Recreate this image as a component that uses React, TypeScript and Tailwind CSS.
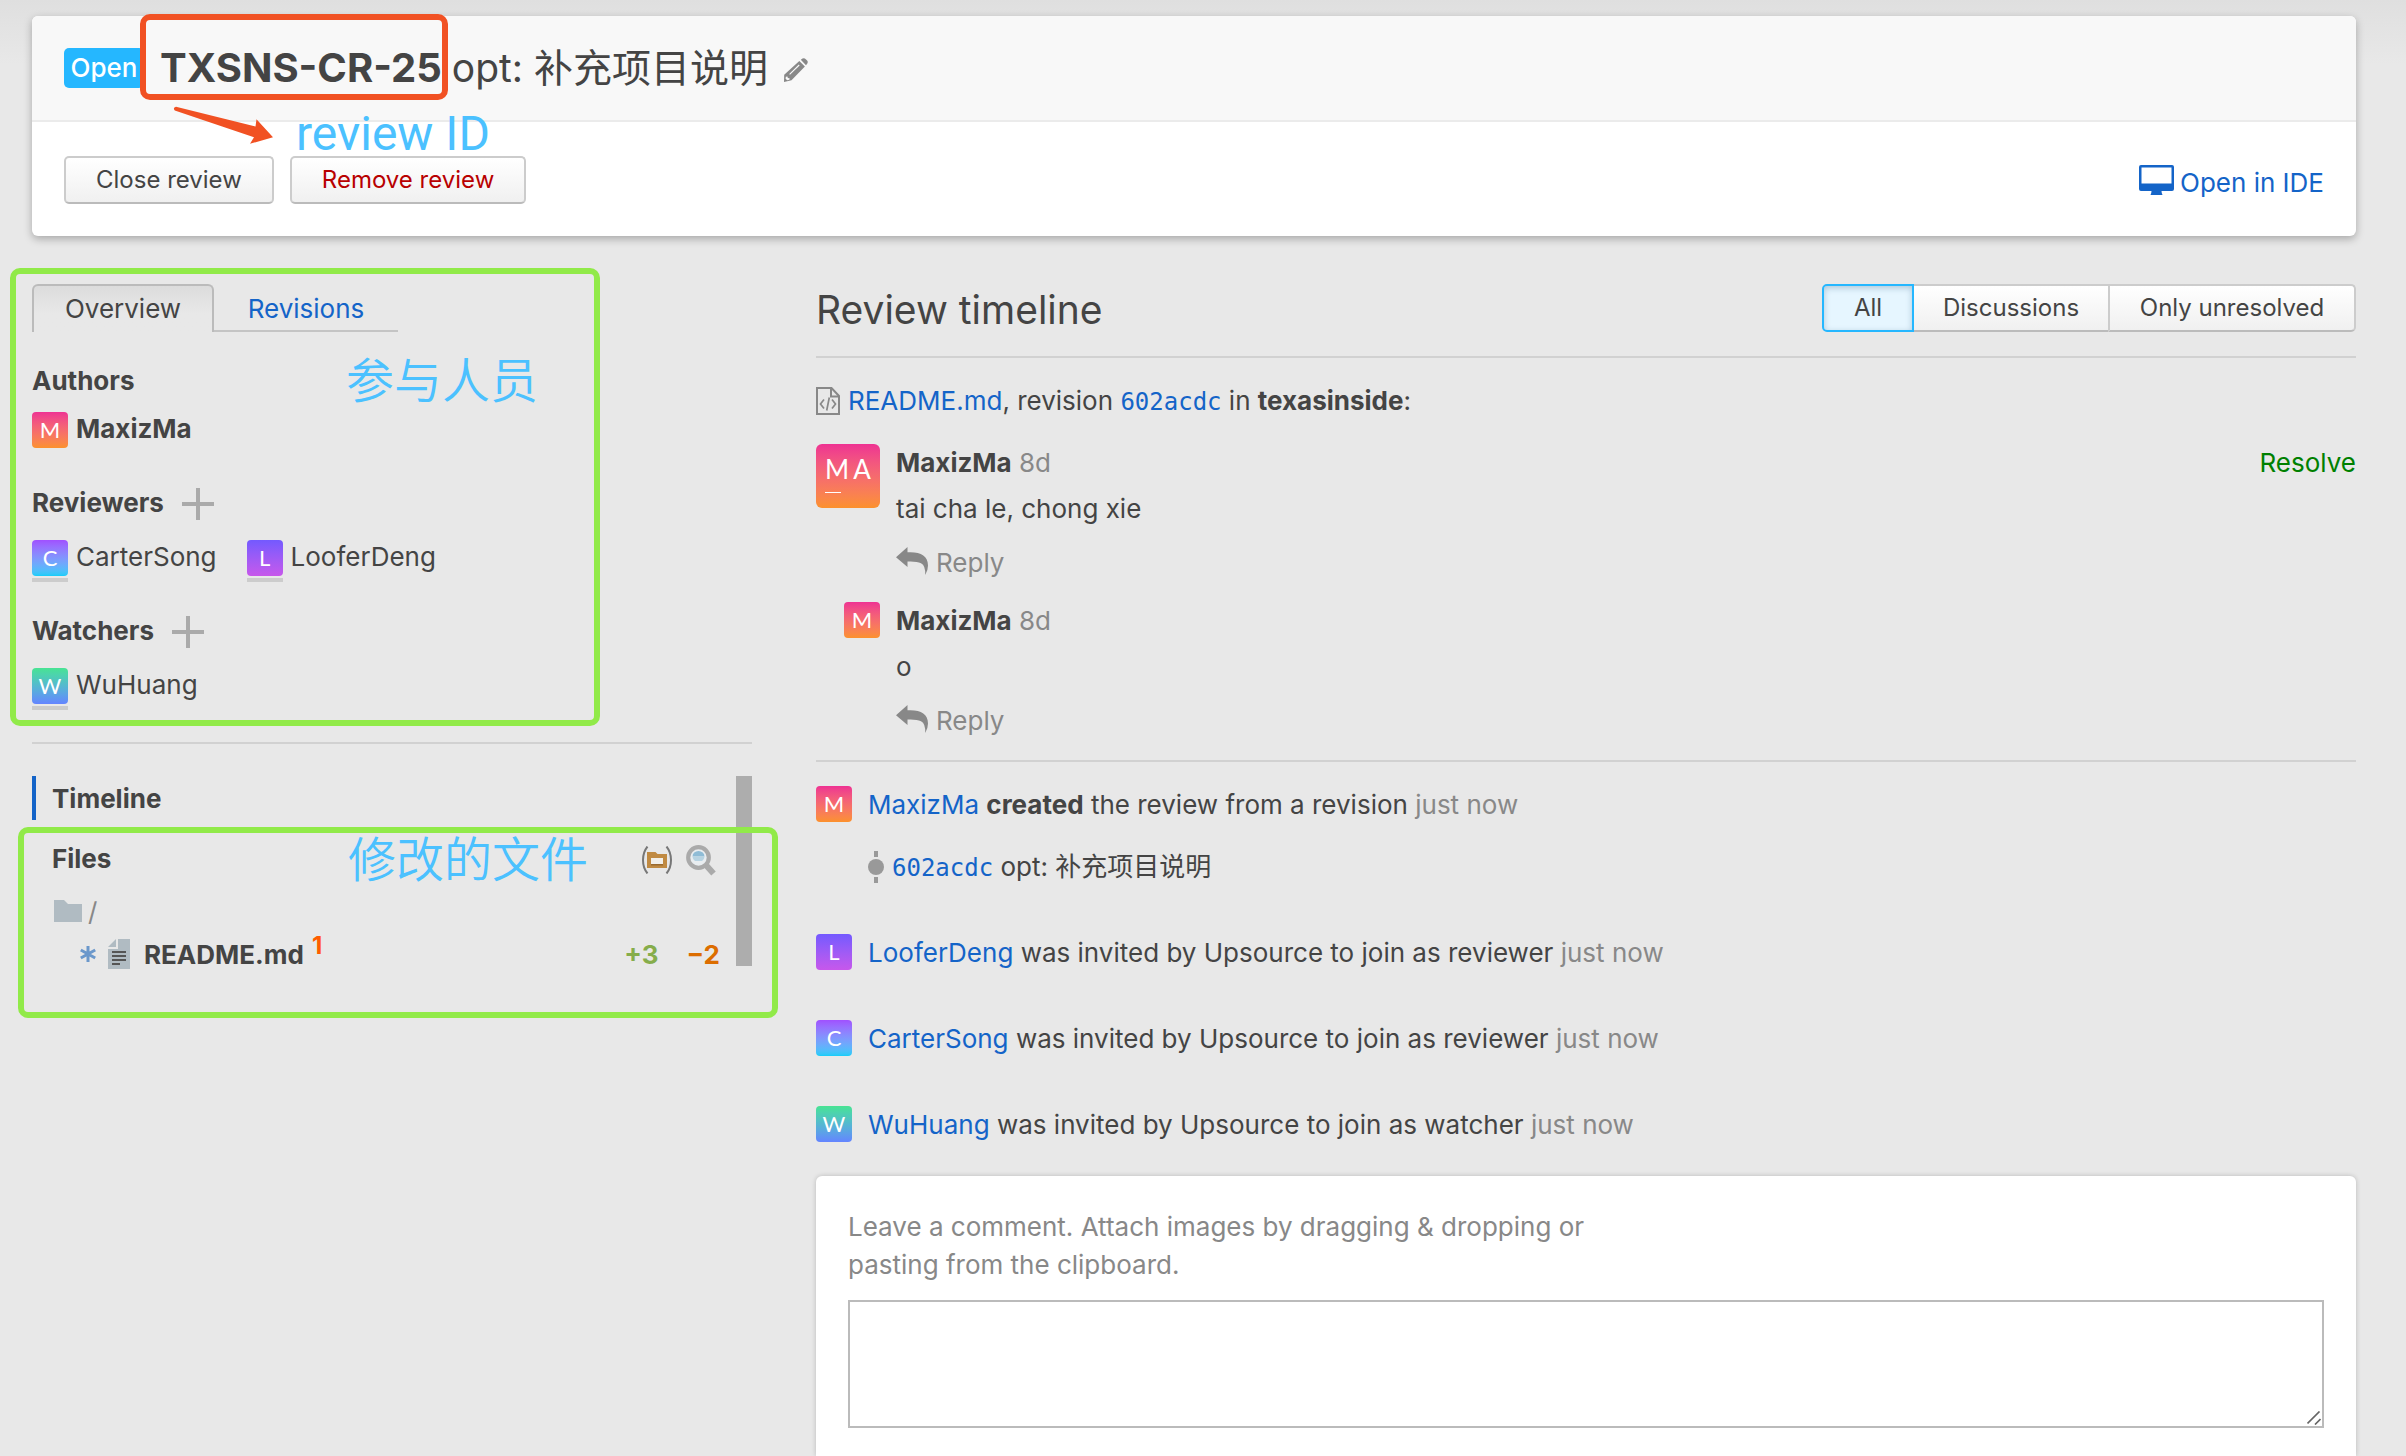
import type { ReactNode } from "react";

const GRADIENTS = {
  M: "from-[#ee3192] to-[#fc912b]",
  C: "from-[#a050ff] to-[#0ecdf9]",
  L: "from-[#7359ff] to-[#c757eb]",
  W: "from-[#48e392] to-[#6484ff]",
};

type Initial = keyof typeof GRADIENTS;

function Avatar({ initial }: { initial: Initial }) {
  return (
    <span
      className={`flex size-9 shrink-0 items-center justify-center rounded-[4px] bg-linear-to-b font-['Lato',sans-serif] text-[22px] leading-none text-white ${GRADIENTS[initial]}`}
    >
      {initial}
    </span>
  );
}

function Person({ initial, name, bold = false, pending = false }: { initial: Initial; name: string; bold?: boolean; pending?: boolean }) {
  return (
    <li className="flex gap-2">
      <span className="flex flex-col gap-[2px]">
        <Avatar initial={initial} />
        {pending && <span className="h-1 bg-[#ccc]" />}
      </span>
      <span className={bold ? "leading-[34px] font-bold" : "leading-[34px]"}>{name}</span>
    </li>
  );
}

function PlusButton({ label }: { label: string }) {
  return (
    <button type="button" aria-label={label} className="size-8 cursor-pointer">
      <svg viewBox="0 0 32 32" className="size-8" fill="#aaa">
        <path d="M14 0h4v14h14v4H18v14h-4V18H0v-4h14z" />
      </svg>
    </button>
  );
}

function PencilIcon() {
  return (
    <svg viewBox="0 0 24 24" className="size-6" fill="#888">
      <path d="M16.800 1.800 18.500.6q1.700-1 3 .3l1.600 1.700q1.200 1.300.2 2.900L22 7.300z" />
      <path fillRule="evenodd" d="M15.300 3 20.900 8.600 7.500 22.200 0 24l.2-7.300zM5.200 16l.8.8 9.600-9.400-.8-.8zM1.800 18.800l-.2 1.900 1.600 1.600 2.200-.5.200-1.500-1.800-.3-.3-1.600z" />
    </svg>
  );
}

function MonitorIcon() {
  return (
    <svg viewBox="0 0 35 30" className="h-[30px] w-[35px]" fill="#1464c8">
      <path fillRule="evenodd" d="M2 0h31q2 0 2 2v22q0 2-2 2H22.500q0 2 1 4H11.500q1-2 1-4H2q-2 0-2-2V2q0-2 2-2zM2.500 2.500v16h30v-16z" />
    </svg>
  );
}

function CodeFileIcon() {
  return (
    <svg viewBox="0 0 24 28" className="h-7 w-6 shrink-0" fill="none" stroke="#888" strokeWidth="2">
      <path d="M1 1h14.500L23 9v18H1z" />
      <path d="M15 1v8.500h8" />
      <path d="M8 12.500 4.500 17 8 21.500M16 12.500l3.500 4.500-3.500 4.500M13.300 10.500l-2.600 13" strokeWidth="1.700" />
    </svg>
  );
}

function ReplyIcon() {
  return (
    <svg viewBox="0 0 32 28" className="h-7 w-8" fill="#888">
      <path d="M0 10.300 11.500 0v5.300C24 4.500 32 8.500 32 18.500q0 5-2.800 9.500.5-9.500-4.200-11.800Q20.500 14 11.500 14.500V20z" />
    </svg>
  );
}

function ParenFolderIcon() {
  return (
    <svg viewBox="0 0 30 28" className="h-7 w-[30px]">
      <path d="M5.500.5Q1 6 1 14t4.500 13.500M24.500.5Q29 6 29 14t-4.500 13.500" fill="none" stroke="#777" strokeWidth="2" />
      <path fillRule="evenodd" d="M5 6h8.500l2 2H25v14H5zM9 12v6h12v-6z" fill="#c08a42" />
      <path d="M9 12h12v6H9z" fill="#f2efe9" />
      <path d="M9 18h12v1.500H9z" fill="#9a6a2e" />
    </svg>
  );
}

function SearchIcon() {
  return (
    <svg viewBox="0 0 30 31" className="h-[31px] w-[30px]">
      <path d="m19 19 8.500 9.500" stroke="#aaa" strokeWidth="6" />
      <circle cx="12.500" cy="12.500" r="10.300" fill="#e9edf0" stroke="#aaa" strokeWidth="4.200" />
      <path d="M6.500 11.500a6 5.500 0 0 1 12 0z" fill="#8fbcd6" />
      <path d="M6.500 11.500h12q0 3-2.500 4.500h-7q-2.500-1.500-2.500-4.500z" fill="#b7d3e2" />
    </svg>
  );
}

function FolderIcon() {
  return (
    <svg viewBox="0 0 28 22" className="h-[22px] w-7" fill="#b0bbc2">
      <path d="M0 0h10l4 4h14v18H0z" />
    </svg>
  );
}

function AsteriskIcon() {
  return (
    <svg viewBox="0 0 16 16" className="size-4" stroke="#6b98cb" strokeWidth="3">
      <path d="M8 0v16M.8 4l14.400 8M15.200 4 .8 12" />
    </svg>
  );
}

function TextFileIcon() {
  return (
    <svg viewBox="0 0 22 30" className="h-[30px] w-[22px]">
      <path d="M10 0h12v30H0V10h10zM8 0v8H0z" fill="#b0bbc2" />
      <path d="M4 13h14M4 17h14M4 21h14M4 25h8" stroke="#555" strokeWidth="2" />
    </svg>
  );
}

function CommitNodeIcon() {
  return (
    <svg viewBox="0 0 16 32" className="h-8 w-4 shrink-0" fill="#999">
      <path d="M6 0h4v6H6zM6 26h4v6H6z" />
      <circle cx="8" cy="16" r="8" />
    </svg>
  );
}

function ArrowMark() {
  return (
    <svg viewBox="0 0 100 38" className="absolute top-[90px] left-[141px] h-[38px] w-[100px]" fill="#f15123">
      <path d="M3 .8 82.500 20.500 83.500 13.300 100 31.300 77 37.800 81 31.300 1.800 4.500Q-.5 1.500 3 .8z" />
    </svg>
  );
}

const ACTION =
  "h-12 cursor-pointer rounded-[5px] border-2 border-[#ccc] border-b-[#bbb] bg-linear-to-b from-white to-[#f0f0f0] px-[30px] text-2xl leading-none";

function Mono({ children }: { children: ReactNode }) {
  return (
    <a href="#revision" className="font-['DejaVu_Sans_Mono',monospace] text-2xl leading-none text-[#1464c8]">
      {children}
    </a>
  );
}

function Reply() {
  return (
    <button type="button" className="mt-4 flex h-[38px] cursor-pointer items-center gap-2 text-[#888]">
      <span className="pb-1">
        <ReplyIcon />
      </span>
      Reply
    </button>
  );
}

function Comment({ avatar, text, action }: { avatar: ReactNode; text: string; action?: ReactNode }) {
  return (
    <article className="flex gap-4 leading-[38px]">
      <div className="flex w-16 shrink-0 justify-end">{avatar}</div>
      <div className="flex-1">
        <div className="flex justify-between">
          <p>
            <b>MaxizMa</b> <time className="text-[#888]">8d</time>
          </p>
          {action}
        </div>
        <p className="mt-2">{text}</p>
        <Reply />
      </div>
    </article>
  );
}

function Event({ initial, name, children }: { initial: Initial; name: string; children: ReactNode }) {
  return (
    <div className="flex gap-4 leading-[38px]">
      <Avatar initial={initial} />
      <p>
        <a href="#user" className="text-[#1464c8]">{name}</a> {children} <span className="text-[#888]">just now</span>
      </p>
    </div>
  );
}

const NOTE = "absolute leading-none whitespace-nowrap text-[#4bc1ff] text-5xl";
const INVITES: { initial: Initial; name: string; role: string }[] = [
  { initial: "L", name: "LooferDeng", role: "reviewer" },
  { initial: "C", name: "CarterSong", role: "reviewer" },
  { initial: "W", name: "WuHuang", role: "watcher" },
];

export default function App() {
  return (
    <div className="flex min-h-screen flex-col bg-[#e8e8e8] bg-[linear-gradient(#dfdfdf,#e8e8e8_64px)] pt-4 pr-[50px] pl-8 font-['Inter','Noto_Sans_CJK_SC',sans-serif] text-[26px] text-[#444]">
      <header className="relative rounded-[6px] bg-white shadow-[0_3px_8px_rgba(0,0,0,0.28)]">
        <div className="flex h-[106px] items-center rounded-t-[6px] border-b-2 border-[#ebebeb] bg-[#f8f8f8] pl-8">
          <span className="flex h-10 w-20 items-center justify-center rounded-[5px] bg-[#25b7ff] leading-none font-medium text-white">Open</span>
          <h1 className="ml-4 flex items-center leading-[50px]">
            <b className="text-[40px]">TXSNS-CR-25</b>
            <span className="ml-[10px] text-[39px]">opt: 补充项目说明</span>
          </h1>
          <button type="button" aria-label="Edit title" className="ml-4 cursor-pointer pt-1">
            <PencilIcon />
          </button>
        </div>
        <div className="flex items-center justify-between px-8 pt-[34px] pb-8">
          <div className="flex gap-4">
            <button type="button" className={ACTION}>Close review</button>
            <button type="button" className={`${ACTION} text-[#b80000]`}>Remove review</button>
          </div>
          <a href="#ide" className="flex items-center gap-[6px] text-[#1464c8]">
            <MonitorIcon />
            <span className="pt-1">Open in IDE</span>
          </a>
        </div>
        <div className="pointer-events-none absolute -top-[2px] left-[108px] h-[86px] w-[308px] rounded-[10px] border-6 border-[#f15123]" />
        <ArrowMark />
        <span className={`${NOTE} top-[94px] left-[264px] font-['Roboto',sans-serif]`}>review ID</span>
      </header>

      <main className="mt-12 flex flex-1 gap-16">
        <aside className="w-[720px] shrink-0">
          <section className="relative">
            <nav className="flex h-12">
              <a href="#overview" className="flex w-[182px] items-center justify-center rounded-t-[6px] border-2 border-b-0 border-[#bbb] bg-linear-to-b from-[#dcdcdc] to-[#e8e8e8] to-60% pb-[2px]">
                Overview
              </a>
              <a href="#revisions" className="flex w-[184px] items-center justify-center border-b-2 border-[#c4c4c4] pt-[2px] text-[#1464c8]">
                Revisions
              </a>
            </nav>

            <h2 className="mt-8 leading-[34px] font-bold">Authors</h2>
            <ul className="mt-[14px]">
              <Person initial="M" name="MaxizMa" bold />
            </ul>

            <div className="mt-[38px] flex h-9 items-center gap-[18px]">
              <h2 className="self-start leading-[34px] font-bold">Reviewers</h2>
              <PlusButton label="Add reviewer" />
            </div>
            <ul className="mt-[18px] flex gap-[30px]">
              <Person initial="C" name="CarterSong" pending />
              <Person initial="L" name="LooferDeng" pending />
            </ul>

            <div className="mt-8 flex h-9 items-center gap-[18px]">
              <h2 className="self-start leading-[34px] font-bold">Watchers</h2>
              <PlusButton label="Add watcher" />
            </div>
            <ul className="mt-[18px] flex">
              <Person initial="W" name="WuHuang" pending />
            </ul>

            <div className="pointer-events-none absolute -top-4 -bottom-4 -left-[22px] w-[590px] rounded-[10px] border-6 border-[#91ea49]" />
            <span className={`${NOTE} top-[73px] left-[314px] font-[350]`}>参与人员</span>
          </section>

          <hr className="mt-8 border-t-2 border-[#d1d1d1]" />

          <section className="relative mt-8">
            <div className="flex h-11 items-center border-l-4 border-[#1464c8] pl-4">
              <a href="#timeline" className="font-bold">Timeline</a>
            </div>
            <div className="absolute top-0 right-0 h-[190px] w-4 bg-[#adadad]" />

            <div className="relative mt-4 pr-8 pl-5">
              <div className="flex h-11 items-center justify-between">
                <h2 className="font-bold">Files</h2>
                <div className="flex items-center gap-[14px] pt-1 pr-1">
                  <button type="button" aria-label="Group by folder" className="cursor-pointer">
                    <ParenFolderIcon />
                  </button>
                  <button type="button" aria-label="Search files" className="cursor-pointer">
                    <SearchIcon />
                  </button>
                </div>
              </div>
              <div className="mt-3 flex h-[38px] items-center gap-[6px] pl-[2px] text-[#888]">
                <FolderIcon />
                <span>/</span>
              </div>
              <div className="mt-[6px] flex h-9 items-center pl-7 font-bold">
                <AsteriskIcon />
                <a href="#readme" className="ml-3 flex items-center gap-[14px]">
                  <TextFileIcon />
                  README.md
                </a>
                <span className="ml-2 h-full text-2xl leading-5 text-[#ff5c00]">1</span>
                <span className="ml-auto text-[#86ad4b]">+3</span>
                <span className="ml-7 text-[#dc6d00]">−2</span>
              </div>
              <div className="pointer-events-none absolute -top-[9px] -right-[26px] -left-[14px] h-[191px] rounded-[10px] border-6 border-[#91ea49]" />
              <span className={`${NOTE} top-0 left-[316px] font-[350]`}>修改的文件</span>
            </div>
          </section>
        </aside>

        <section className="flex flex-1 flex-col">
          <div className="flex h-12 justify-between">
            <h2 className="self-end text-[39px] leading-[44px]">Review timeline</h2>
            <div className="flex text-2xl leading-none">
              <button type="button" className="w-[92px] cursor-pointer rounded-l-[5px] border-2 border-[#25b7ff] bg-[#e6f6ff] shadow-[inset_0_2px_6px_rgba(0,60,100,0.25)]">
                All
              </button>
              <button type="button" className="w-[194px] cursor-pointer border-y-2 border-[#ccc] border-b-[#bbb] bg-linear-to-b from-white to-[#f0f0f0]">
                Discussions
              </button>
              <button type="button" className="w-[248px] cursor-pointer rounded-r-[5px] border-2 border-[#ccc] border-b-[#bbb] bg-linear-to-b from-white to-[#f0f0f0]">
                Only unresolved
              </button>
            </div>
          </div>
          <hr className="mt-6 border-t-2 border-[#d1d1d1]" />

          <div className="mt-[26px] flex items-center gap-2 leading-[34px]">
            <CodeFileIcon />
            <p>
              <a href="#readme" className="text-[#1464c8]">README.md</a>, revision <Mono>602acdc</Mono> in <b>texasinside</b>:
            </p>
          </div>

          <div className="mt-[26px] flex flex-col gap-5">
            <Comment
              avatar={
                <span className="flex size-16 flex-col items-start rounded-[6px] bg-linear-to-b from-[#ee3192] to-[#fc912b] px-[9px] pt-3 font-['Lato',sans-serif] text-[26px] leading-[26px] text-white">
                  <span className="flex gap-1">
                    <span>M</span>
                    <span>A</span>
                  </span>
                  <span className="mt-[10px] h-px w-4 bg-white" />
                </span>
              }
              text="tai cha le, chong xie"
              action={<button type="button" className="cursor-pointer text-[#008000]">Resolve</button>}
            />
            <Comment avatar={<Avatar initial="M" />} text="o" />
          </div>

          <hr className="mt-5 border-t-2 border-[#d1d1d1]" />

          <div className="mt-6 flex flex-col gap-12">
            <div>
              <Event initial="M" name="MaxizMa">
                <b>created</b> the review from a revision
              </Event>
              <div className="mt-6 flex h-[38px] items-center gap-2 pl-[52px]">
                <CommitNodeIcon />
                <p className="leading-[38px]">
                  <Mono>602acdc</Mono> opt: 补充项目说明
                </p>
              </div>
            </div>
            {INVITES.map((item) => (
              <Event key={item.name} initial={item.initial} name={item.name}>
                was invited by Upsource to join as {item.role}
              </Event>
            ))}
          </div>

          <form className="mt-8 flex-1 rounded-t-[6px] bg-white px-8 pt-8 shadow-[0_0_5px_rgba(0,0,0,0.2)]">
            <label htmlFor="comment" className="block max-w-[780px] leading-[38px] text-[#888]">
              Leave a comment. Attach images by dragging &amp; dropping or pasting from the clipboard.
            </label>
            <div className="relative mt-4">
              <textarea id="comment" className="block h-32 w-full resize-none border-2 border-[#bbb] bg-white p-2" />
              <svg viewBox="0 0 14 14" className="pointer-events-none absolute right-[3px] bottom-[3px] size-[14px]" stroke="#666" strokeWidth="1.700">
                <path d="M.5 12.500 12.500.5M8 13.500 13.500 8" />
              </svg>
            </div>
          </form>
        </section>
      </main>
    </div>
  );
}
